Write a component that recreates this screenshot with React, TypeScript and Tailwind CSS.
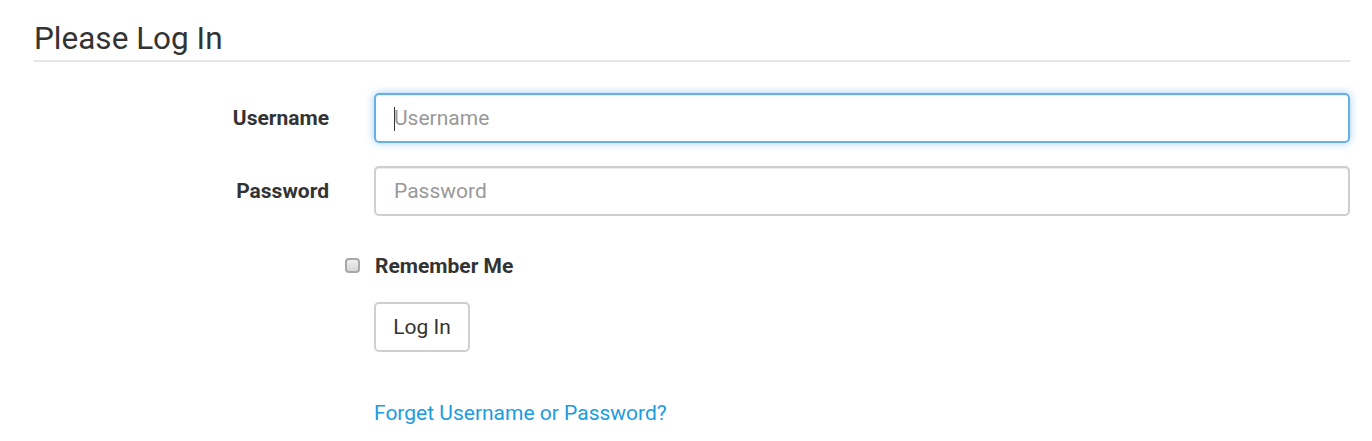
export default function App() {
  return (
    <div className="min-h-screen bg-white pl-[34px] pr-[22px] pt-[22px] font-['Roboto',sans-serif] text-[#333]">
      <h1 className="border-b-2 border-[#e5e5e5] pb-[3px] text-[31.5px] leading-[1.1] font-normal">Please Log In</h1>
      <form className="mt-[31px]" onSubmit={e => e.preventDefault()}>
        <div className="flex items-center">
          <label className="w-[340px] shrink-0 pr-[45px] pt-[2px] text-right text-[21px] font-bold">Username</label>
          <div className="relative flex-1">
            <input
              placeholder="Username"
              className="h-[50px] w-full rounded-[5px] border-2 border-[#66afe9] px-[18px] text-[21px] text-[#555] shadow-[inset_0_1px_1px_rgba(0,0,0,0.075),0_0_8px_rgba(102,175,233,0.6)] outline-none placeholder:text-[#999]"
            />
            <span className="absolute left-[20px] top-[14px] h-[24px] w-px bg-[#333]" />
          </div>
        </div>
        <div className="mt-[23px] flex items-center">
          <label className="w-[340px] shrink-0 pr-[45px] pt-[2px] text-right text-[21px] font-bold">Password</label>
          <input
            type="password"
            placeholder="Password"
            className="h-[50px] flex-1 rounded-[5px] border-2 border-[#cfcfcf] px-[18px] text-[21px] text-[#555] shadow-[inset_0_1px_1px_rgba(0,0,0,0.075)] outline-none placeholder:text-[#999]"
          />
        </div>
        <div className="mt-[37px] flex items-center pl-[340px]">
          <label className="-ml-[29px] flex items-center text-[21px] font-bold leading-[26px]">
            <span className="mr-[15px] h-[15px] w-[15px] rounded-[4px] border-2 border-[#a8a8a8] bg-gradient-to-b from-[#f0f0f0] to-[#d8d8d8]" />
            Remember Me
          </label>
        </div>
        <div className="mt-[23px] pl-[340px]">
          <button className="h-[50px] w-[96px] rounded-[5px] border-2 border-[#cfcfcf] bg-white pt-[3px] text-[21px] text-[#333]">Log In</button>
        </div>
        <div className="mt-[48px] pl-[340px]">
          <a href="#" className="text-[21px] leading-[26px] text-[#1c9ce0]">Forget Username or Password?</a>
        </div>
      </form>
    </div>
  );
}
